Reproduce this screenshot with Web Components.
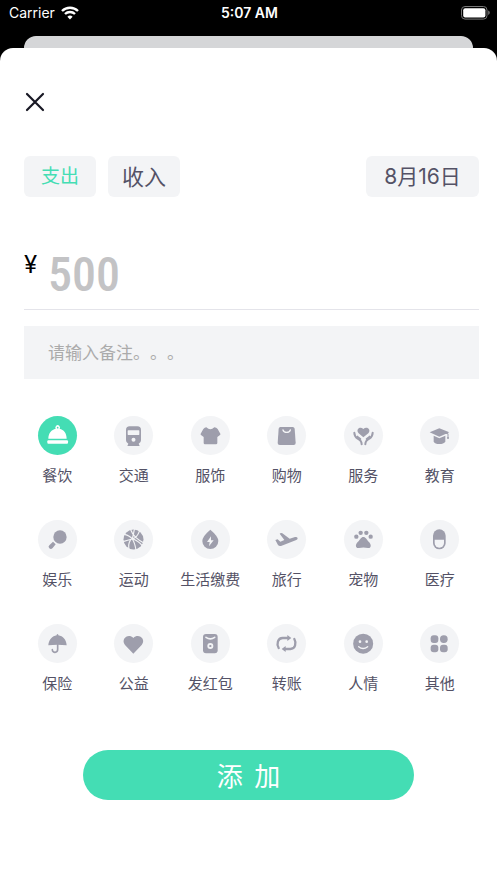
<!DOCTYPE html>
<html lang="zh-CN">
<head>
<meta charset="utf-8">
<meta name="viewport" content="width=device-width, initial-scale=1">
<title>记一笔</title>
<style>
  :root {
    --accent: #44ddb4;
    --surface: #f3f4f6;
    --ink: #545266;
    --icon: #9e9eac;
  }
  html { background: #000; }
  body {
    margin: 0;
    min-height: 100vh;
    display: flex;
    flex-direction: column;
    background: #000;
    color: var(--ink);
    font-family: Inter, "Noto Sans CJK SC", sans-serif;
  }
</style>
</head>
<body>
<status-bar><span slot="carrier">Carrier</span><span slot="time">5:07 AM</span></status-bar>
<modal-sheet>
  <close-button></close-button>
  <entry-toolbar>
    <pill-button active>支出</pill-button>
    <pill-button size="large">收入</pill-button>
    <pill-button slot="end" size="date">8月16日</pill-button>
  </entry-toolbar>
  <amount-field placeholder="500">¥</amount-field>
  <note-field placeholder="请输入备注。。。"></note-field>
  <category-grid>
    <category-item icon="dish" active>餐饮</category-item>
    <category-item icon="train">交通</category-item>
    <category-item icon="shirt">服饰</category-item>
    <category-item icon="bag">购物</category-item>
    <category-item icon="care">服务</category-item>
    <category-item icon="cap">教育</category-item>
    <category-item icon="paddle">娱乐</category-item>
    <category-item icon="ball">运动</category-item>
    <category-item icon="drop">生活缴费</category-item>
    <category-item icon="plane">旅行</category-item>
    <category-item icon="paw">宠物</category-item>
    <category-item icon="pill">医疗</category-item>
    <category-item icon="umbrella">保险</category-item>
    <category-item icon="heart">公益</category-item>
    <category-item icon="packet">发红包</category-item>
    <category-item icon="transfer">转账</category-item>
    <category-item icon="smile">人情</category-item>
    <category-item icon="more">其他</category-item>
  </category-grid>
  <submit-button>添  加</submit-button>
</modal-sheet>

<script>
const define = (name, html, setup) => {
  const template = document.createElement('template');
  customElements.define(name, class extends HTMLElement {
    constructor() {
      super();
      this.attachShadow({ mode: 'open' });
    }
    connectedCallback() {
      if (this.shadowRoot.childNodes.length) return;
      template.innerHTML = html;
      this.shadowRoot.append(template.content.cloneNode(true));
      if (setup) setup(this, this.shadowRoot);
    }
  });
};

define('status-bar', `
<style>
  :host { display: grid; grid-template-columns: 1fr auto 1fr; align-items: center; height: 26px; padding: 0 7px 0 9px; color: #fff; font-size: 14px; line-height: 18px; }
  .left { display: flex; align-items: center; gap: 6px; }
  .time { font-weight: 600; }
  .battery { justify-self: end; }
  svg { display: block; }
</style>
<div class="left"><slot name="carrier"></slot>
  <svg width="18" height="14" viewBox="0 0 18 14" fill="none" stroke="#fff" stroke-width="2.4" aria-hidden="true">
    <path d="M1 5 A11.5 11.5 0 0 1 17 5"/><path d="M4 8 A7.2 7.2 0 0 1 14 8"/><path d="M9 13.4 L6.4 10.8 A3.8 3.8 0 0 1 11.6 10.8Z" fill="#fff" stroke="none"/>
  </svg>
</div>
<div class="time"><slot name="time"></slot></div>
<svg class="battery" width="29" height="14" viewBox="0 0 29 14" aria-hidden="true">
  <rect x=".5" y=".5" width="25.5" height="12.6" rx="3.5" fill="none" stroke="#777"/>
  <rect x="2.2" y="2.2" width="22.2" height="9.3" rx="2" fill="#fff"/>
  <path d="M27.2 4.6 Q28.8 5.2 28.8 6.8 T27.2 9Z" fill="#777"/>
</svg>`);

define('modal-sheet', `
<style>
  :host { display: flex; flex-direction: column; flex: 1; padding-top: 10px; }
  .behind { height: 12px; margin: 0 24px; background: #d5d6d8; border-radius: 12px 12px 0 0; }
  main { flex: 1; display: flex; flex-direction: column; background: #fff; border-radius: 13px 13px 0 0; padding: 40px 18px 40px 24px; }
</style>
<div class="behind"></div>
<main><slot></slot></main>`);

define('close-button', `
<style>
  :host { display: block; }
  button { display: block; border: 0; background: none; padding: 4px 0; cursor: pointer; }
  svg { display: block; }
</style>
<button type="button" aria-label="关闭"><svg width="22" height="20" viewBox="0 0 22 20" fill="none" stroke="#181824" stroke-width="2.2" stroke-linecap="round"><path d="M3 2 19 18M19 2 3 18"/></svg></button>`);

define('entry-toolbar', `
<style>
  :host { display: flex; justify-content: space-between; margin-top: 40px; }
  div { display: flex; gap: 12px; }
</style>
<div><slot></slot></div><div><slot name="end"></slot></div>`);

define('pill-button', `
<style>
  :host { display: block; }
  button { display: block; min-width: 72px; height: 41px; padding: 0 14px; border: 0; border-radius: 6px; background: var(--surface); color: var(--ink); font: 400 20px/42px Inter, "Noto Sans CJK SC", sans-serif; cursor: pointer; white-space: nowrap; }
  :host([active]) button { color: var(--accent); font-size: 19px; }
  :host([size="large"]) button { font-size: 22px; }
  :host([size="date"]) button { min-width: 113px; font-size: 21px; }
</style>
<button type="button"><slot></slot></button>`);

define('amount-field', `
<style>
  :host { display: block; margin-top: 48px; border-bottom: 1px solid #e4e4ea; }
  label { display: flex; align-items: flex-start; height: 64px; color: #000; }
  .sign { width: 24px; font-size: 24px; line-height: 40px; font-weight: 400; }
  input { flex: 1; min-width: 0; height: 60px; border: 0; padding: 0; background: none; outline: 0; color: #000; font: 500 48px/60px "Roboto Condensed", "Liberation Sans Narrow", Roboto, sans-serif; }
  input::placeholder { color: #c3c3c5; opacity: 1; }
</style>
<label><span class="sign"><slot></slot></span><input inputmode="decimal" aria-label="金额"></label>`,
(host, root) => { root.querySelector('input').placeholder = host.getAttribute('placeholder'); });

define('note-field', `
<style>
  :host { display: block; margin-top: 16px; }
  input { display: block; box-sizing: border-box; width: 100%; height: 53px; padding: 0 24px; border: 0; border-radius: 0; outline: 0; background: var(--surface); color: var(--ink); font: 17px/24px Inter, "Noto Sans CJK SC", sans-serif; text-spacing-trim: space-all; font-kerning: none; font-feature-settings: "chws" 0, "halt" 0; }
  input::placeholder { color: #ababab; opacity: 1; }
</style>
<input type="text" aria-label="备注">`,
(host, root) => { root.querySelector('input').placeholder = host.getAttribute('placeholder'); });

define('category-grid', `
<style>
  :host { display: grid; grid-template-columns: repeat(6, minmax(0, 1fr)); row-gap: 32px; margin: 37px 1px 0 -5px; }
</style>
<slot></slot>`);

/* Every icon is drawn on a 117-unit square that spans its round badge. */
const icons = {
  dish: `<path d="M31 68C31 51 41 41 53 38A7 7 0 1 1 65 38C77 41 86 51 86 68Z"/><circle cx="59" cy="35" r="2.5" class="cut"/><rect x="28" y="73" width="62" height="10" rx="3"/>`,
  train: `<path d="M47 31H70Q81 31 81 42V73Q81 81 74 83L77 90H40L43 83Q36 81 36 73V42Q36 31 47 31Z"/><rect x="41" y="43" width="35" height="14" rx="2" class="cut"/><circle cx="58.500" cy="71" r="6" class="cut"/>`,
  shirt: `<path d="M46 34Q58 46 70 34Q76 34 80 39L88 53Q89 56 86 58L79 63V81Q79 85 75 85H42Q38 85 38 81V63L31 58Q28 56 29 53L37 39Q41 34 46 34Z"/>`,
  bag: `<path d="M40 33H77Q82 33 83 38L86 81Q86 87 80 87H38Q32 87 32 81L35 38Q36 33 40 33Z"/><path d="M48 42Q50 49 59 49T70 42" class="line cutline" stroke-width="4"/>`,
  care: `<path d="M58 64L44 52C34 40 48 30 58 39C68 30 83 40 73 52Z"/><path d="M31 50Q31 61 41 68Q53 74 53 85M86 50Q86 61 76 68Q64 74 64 85" class="line" stroke-width="6"/><path d="M40 62L49 69M77 62L68 69" class="line" stroke-width="6"/>`,
  cap: `<path d="M29 49L58 37L88 49L58 62Z"/><path d="M41 59L58 67L76 59V77Q71 84 58 84T41 77Z"/><path d="M60 50L84 53V65" class="line" stroke-width="3"/><circle cx="84" cy="66" r="3"/>`,
  paddle: `<circle cx="66" cy="51" r="20"/><path d="M45 65L53 73L44 84Q39 90 34 85Q29 80 34 76Z"/>`,
  ball: `<circle cx="58.500" cy="58.500" r="30"/><path d="M31 43Q48 47 55 57T66 90M27 65Q41 60 55 57T77 32M49 27Q55 43 65 52T91 70M46 92Q41 72 49 61M61 28Q58 44 55 57M56 56Q76 65 84 76" class="line cutline" stroke-width="3.500"/>`,
  drop: `<path d="M58 29Q34 49 34 63A24 24 0 0 0 82 63Q82 49 58 29Z"/><path d="M60 49L48 66H56L54 79L68 61H60Z" class="cut"/>`,
  plane: `<path d="M25 60L32 58L40 65L52 60L38 41Q41 38 46 40L68 56L84 51Q91 50 92 55Q92 59 86 61L44 77Q37 80 33 75Z"/>`,
  paw: `<circle cx="37" cy="50" r="6.500"/><circle cx="50" cy="38.500" r="6.500"/><circle cx="67" cy="38.500" r="6.500"/><circle cx="80" cy="50" r="6.500"/><path d="M58 51C65 51 68 59 74 65C84 74 81 86 72 84Q58 81 45 84C35 86 32 74 42 65C49 59 51 51 58 51Z"/>`,
  pill: `<rect x="39" y="28" width="38" height="60" rx="19"/><path d="M44 59H72V69A14 14 0 0 1 44 69Z" class="cut"/>`,
  umbrella: `<path d="M31 64C32 47 43 36 56 34V32Q58 28 61 32V34C75 36 85 47 86 64Q58 61 31 64Z"/><path d="M59 60V76C59 88 43 88 43 77" class="line" stroke-width="5"/>`,
  heart: `<path d="M58 89L33 63C19 45 43 26 58 42C73 26 98 45 83 63Z"/>`,
  packet: `<rect x="36" y="30" width="44" height="58" rx="9"/><path d="M45 40Q58 49 71 40" class="line cutline" stroke-width="5"/><circle cx="58" cy="66" r="9" class="cut"/><rect x="55" y="63" width="6" height="6" rx="1"/>`,
  transfer: `<path d="M35 72C28 60 32 42 47 42H64M82 45C89 57 85 75 70 75H53" class="line" stroke-width="7" stroke-linecap="butt"/><path d="M61 33L73 42L61 51ZM56 66L44 75L56 84Z"/>`,
  smile: `<circle cx="57.500" cy="59" r="30"/><circle cx="48" cy="53" r="4" class="cut"/><circle cx="68" cy="53" r="4" class="cut"/><path d="M44 68Q57 79 71 68" class="line cutline" stroke-width="4"/>`,
  more: `<rect x="32" y="34" width="23" height="23" rx="9"/><rect x="60" y="34" width="23" height="23" rx="11"/><rect x="32" y="62" width="23" height="23" rx="9"/><rect x="60" y="62" width="23" height="23" rx="9"/>`
};

define('category-item', `
<style>
  :host { display: block; --badge: var(--surface); --glyph: var(--icon); }
  :host([active]) { --badge: var(--accent); --glyph: #fff; }
  button { display: flex; flex-direction: column; align-items: center; gap: 9px; width: 100%; padding: 0; border: 0; background: none; color: var(--ink); font: 15px/24px Inter, "Noto Sans CJK SC", sans-serif; white-space: nowrap; cursor: pointer; }
  svg { display: block; width: 39px; height: 39px; border-radius: 50%; background: var(--badge); fill: var(--glyph); }
  .cut { fill: var(--badge); }
  .line { fill: none; stroke: var(--glyph); stroke-linecap: round; }
  .cutline { stroke: var(--badge); }
</style>
<button type="button"><svg viewBox="0 0 117 117" aria-hidden="true"></svg><slot></slot></button>`,
(host, root) => {
  root.querySelector('svg').innerHTML = icons[host.getAttribute('icon')];
  root.querySelector('button').setAttribute('aria-pressed', host.hasAttribute('active'));
});

define('submit-button', `
<style>
  :host { display: flex; justify-content: center; margin: 54px 0 0 -6px; }
  button { width: 72%; height: 50px; padding: 0; border: 0; border-radius: 25px; background: var(--accent); color: #fff; font: 26px/48px "Noto Sans CJK SC", sans-serif; white-space: pre; cursor: pointer; }
</style>
<button type="button"><slot></slot></button>`);
</script>
</body>
</html>
